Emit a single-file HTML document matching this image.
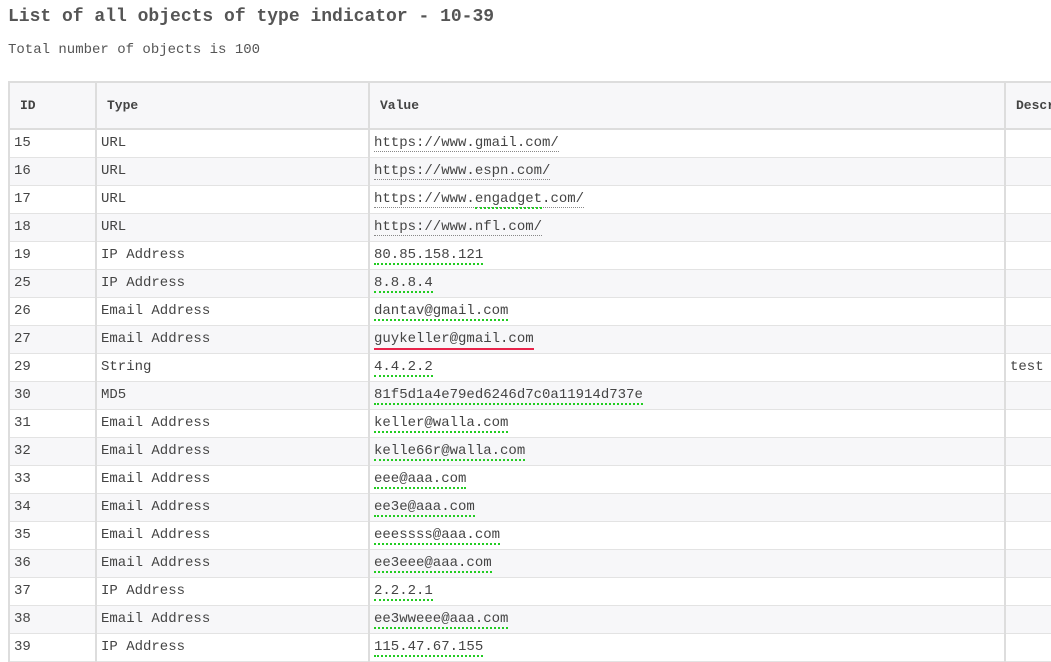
<!DOCTYPE html>
<html><head><style>
html,body{margin:0;padding:0;background:#fff;overflow:hidden;width:1051px;height:649px}
body{font-family:"Liberation Mono",monospace;color:#444}
h1{position:absolute;left:8px;top:6px;margin:0;font-size:18px;font-weight:bold;color:#555;line-height:22px}
.sub{position:absolute;left:8px;top:41px;font-size:14px;color:#555;line-height:18px}
table{position:absolute;left:8px;top:81px;border-collapse:collapse;font-size:14px;table-layout:fixed;width:1200px}
th{background:#f7f7f9;text-align:left;font-weight:bold;font-size:13px;height:45px;padding:0 0 0 10px;border:2px solid #ddd;color:#444}
td{height:27px;padding:0 0 0 4px;border-left:2px solid #ddd;border-bottom:1px solid #e3e3e3;color:#444;line-height:27px;white-space:nowrap}
tr:nth-child(even) td{background:#f7f7f9}
.u{border-bottom:1px dotted #888}
.g{border-bottom:2px dotted #2c2}
.r{border-bottom:2px solid #e8234a;padding-bottom:1px}
</style></head><body>
<h1>List of all objects of type indicator - 10-39</h1>
<div class="sub">Total number of objects is 100</div>
<table>
<colgroup><col style="width:87px"><col style="width:273px"><col style="width:636px"><col style="width:205px"></colgroup>
<thead><tr><th>ID</th><th>Type</th><th>Value</th><th>Description</th></tr></thead>
<tbody>
<tr><td>15</td><td>URL</td><td><span class="u">https://www.gmail.com/</span></td><td></td></tr>
<tr><td>16</td><td>URL</td><td><span class="u">https://www.espn.com/</span></td><td></td></tr>
<tr><td>17</td><td>URL</td><td><span class="u">https://www.<span class="g">engadget</span>.com/</span></td><td></td></tr>
<tr><td>18</td><td>URL</td><td><span class="u">https://www.nfl.com/</span></td><td></td></tr>
<tr><td>19</td><td>IP Address</td><td><span class="g">80.85.158.121</span></td><td></td></tr>
<tr><td>25</td><td>IP Address</td><td><span class="g">8.8.8.4</span></td><td></td></tr>
<tr><td>26</td><td>Email Address</td><td><span class="g">dantav@gmail.com</span></td><td></td></tr>
<tr><td>27</td><td>Email Address</td><td><span class="r">guykeller@gmail.com</span></td><td></td></tr>
<tr><td>29</td><td>String</td><td><span class="g">4.4.2.2</span></td><td>test</td></tr>
<tr><td>30</td><td>MD5</td><td><span class="g">81f5d1a4e79ed6246d7c0a11914d737e</span></td><td></td></tr>
<tr><td>31</td><td>Email Address</td><td><span class="g">keller@walla.com</span></td><td></td></tr>
<tr><td>32</td><td>Email Address</td><td><span class="g">kelle66r@walla.com</span></td><td></td></tr>
<tr><td>33</td><td>Email Address</td><td><span class="g">eee@aaa.com</span></td><td></td></tr>
<tr><td>34</td><td>Email Address</td><td><span class="g">ee3e@aaa.com</span></td><td></td></tr>
<tr><td>35</td><td>Email Address</td><td><span class="g">eeessss@aaa.com</span></td><td></td></tr>
<tr><td>36</td><td>Email Address</td><td><span class="g">ee3eee@aaa.com</span></td><td></td></tr>
<tr><td>37</td><td>IP Address</td><td><span class="g">2.2.2.1</span></td><td></td></tr>
<tr><td>38</td><td>Email Address</td><td><span class="g">ee3wweee@aaa.com</span></td><td></td></tr>
<tr><td>39</td><td>IP Address</td><td><span class="g">115.47.67.155</span></td><td></td></tr>
</tbody></table>
</body></html>
